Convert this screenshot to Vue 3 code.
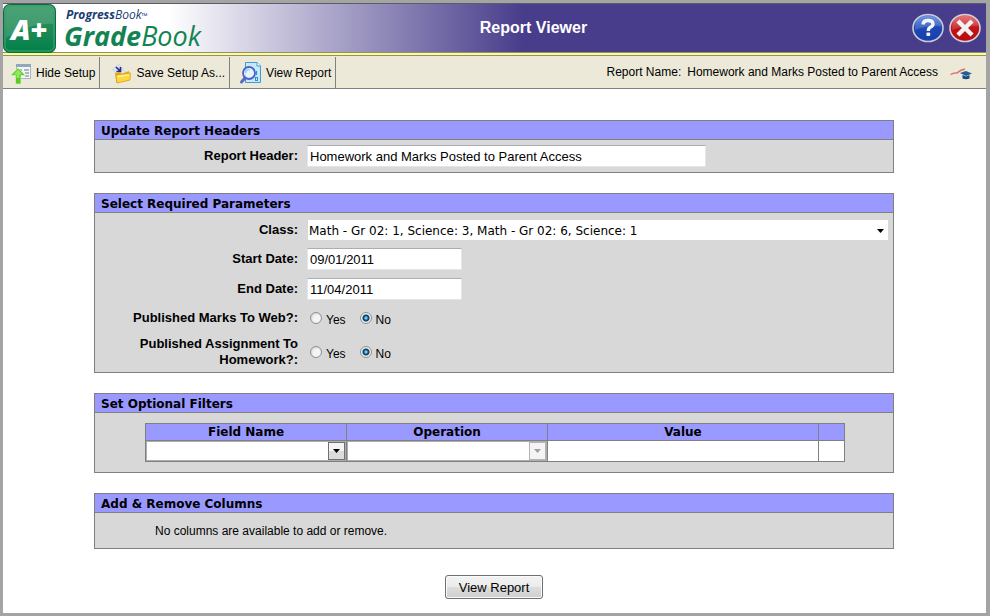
<template>
  <div class="window">
    <header class="banner">
      <div class="brand">
        <svg class="brand-mark" viewBox="0 0 54 50" role="img" aria-label="A+">
          <defs>
            <linearGradient id="markFill" x1="0" y1="0" x2="0" y2="1">
              <stop offset="0" stop-color="#2e9560" />
              <stop offset="0.5" stop-color="#1f8a57" />
              <stop offset="1" stop-color="#00814a" />
            </linearGradient>
          </defs>
          <rect x="0.5" y="0.5" width="52" height="48" rx="6" fill="url(#markFill)" stroke="#0b6b40" />
          <rect x="2" y="2" width="49" height="45" rx="5" fill="none" stroke="#6fbb93" stroke-opacity="0.6" />
          <path d="M3 24 V7 Q3 3 7 3 H46 Q50 3 50 7 V20 Q28 18 3 34Z" fill="#fff" fill-opacity="0.14" />
          <text x="8" y="36" class="mark-text">A+</text>
        </svg>
        <div class="brand-text">
          <span class="brand-top"><b>Progress</b>Book<small>™</small></span>
          <span class="brand-main"><b>Grade</b>Book</span>
        </div>
      </div>
      <h1>Report Viewer</h1>
      <div class="banner-actions">
        <button type="button" class="round-button" aria-label="Help">
          <svg viewBox="0 0 32 30">
            <defs>
              <linearGradient id="helpFill" x1="0" y1="0" x2="0" y2="1">
                <stop offset="0" stop-color="#5c86e0" />
                <stop offset="0.5" stop-color="#1c47b4" />
                <stop offset="1" stop-color="#173fae" />
              </linearGradient>
            </defs>
            <ellipse cx="16" cy="15" rx="15" ry="13.5" fill="url(#helpFill)" stroke="#c9cbd3" stroke-width="1.6" />
            <path d="M3 15 Q3 3 16 3 Q29 3 29 13 Q18 12 3 17Z" fill="#fff" fill-opacity="0.16" />
            <path d="M11 11.5 Q11.500 7.500 16 7.500 Q21 7.500 21 11 Q21 13 18.300 14.300 Q16.300 15.300 16.300 18" fill="none" stroke="#f3f4f8" stroke-width="3.400" />
            <rect x="14.400" y="19.500" width="3.800" height="3.600" rx="1" fill="#f3f4f8" />
          </svg>
        </button>
        <button type="button" class="round-button" aria-label="Close">
          <svg viewBox="0 0 32 30">
            <defs>
              <linearGradient id="closeFill" x1="0" y1="0" x2="0" y2="1">
                <stop offset="0" stop-color="#e4696b" />
                <stop offset="0.5" stop-color="#c01418" />
                <stop offset="1" stop-color="#b80c10" />
              </linearGradient>
            </defs>
            <ellipse cx="16" cy="15" rx="15" ry="13.5" fill="url(#closeFill)" stroke="#d6cfd6" stroke-width="1.6" />
            <path d="M3 15 Q3 3 16 3 Q29 3 29 13 Q18 12 3 17Z" fill="#fff" fill-opacity="0.14" />
            <path d="M10.500 9.500 L21.500 20.500 M21.500 9.500 L10.500 20.500" stroke="#f4f1f1" stroke-width="4.400" stroke-linecap="square" />
          </svg>
        </button>
      </div>
    </header>

    <nav class="toolbar">
      <button type="button" class="tool" @click="showSetup = !showSetup">
        <svg width="21" height="24" viewBox="1 0 21 24">
          <rect x="6.5" y="3.5" width="14" height="14" fill="#f4f6f8" stroke="#a9b4bd" />
          <rect x="6" y="3" width="15" height="3" fill="#8fa9bb" />
          <path d="M8 9h4M14 9h5M15 12h4M15 15h4" stroke="#5e7888" />
          <path d="M8 7 L15.5 14.5 H11 V23 H5.500 V14.5 H0.500Z" fill="#5cc928" stroke="#d5f2c4" stroke-width="0.7" />
          <path d="M8 8.500 L12.500 13.500 H9.500 V17 H6.500 V13.500 H3.500Z" fill="#93e75d" />
        </svg>
        Hide Setup
      </button>
      <button type="button" class="tool">
        <svg width="24" height="24" viewBox="-4 0 24 24">
          <path d="M0.500 8 L7 3 L13.500 11 L6 16Z" fill="#dfe2f5" stroke="#c4c8e2" stroke-width="0.6" />
          <path d="M4 6 L8 10 M8.500 6 V10.500 H4.500" fill="none" stroke="#26307c" stroke-width="1.7" />
          <path d="M3 12 L8 11 L9.500 13 L17 10 L18 19 L4.500 22Z" fill="#e9a711" />
          <path d="M4 14 L18.500 12 L18 19 L5 22Z" fill="#ffd83d" stroke="#d99a0b" stroke-width="0.700" />
          <path d="M5.500 15.500 L17 13.800" stroke="#fff3a6" stroke-width="1.3" />
        </svg>
        Save Setup As...
      </button>
      <button type="button" class="tool">
        <svg width="24" height="24" viewBox="-1 0 24 24">
          <path d="M6.500 1.500 H18 L21.500 5 V21.500 H6.500Z" fill="#c9e9fb" stroke="#3c9cd9" />
          <path d="M18 1.500 V5 H21.500" fill="#fff" stroke="#3c9cd9" />
          <path d="M17.500 10v4" stroke="#2f8fd0" stroke-width="1.2" />
          <rect x="16.500" y="16.500" width="2" height="3" fill="none" stroke="#2f8fd0" />
          <path d="M6 17 L2.500 21" stroke="#5f69b8" stroke-width="3" stroke-linecap="round" />
          <circle cx="10" cy="12" r="6" fill="#e6f6ff" fill-opacity="0.85" stroke="#4a63c4" stroke-width="1.800" />
          <path d="M6.500 12 Q7 8.500 10.500 8.500" fill="none" stroke="#8ed0f4" stroke-width="1.500" />
        </svg>
        View Report
      </button>
      <div class="report-name">
        <span>Report Name:</span>
        <span>{{ reportName }}</span>
        <svg width="23" height="14" viewBox="0 0 23 14">
          <path d="M0.500 7.500 Q4 5.500 7 6 Q10 3 15 2" fill="none" stroke="#e3696d" stroke-width="1.300" />
          <path d="M10 6 L16 4 L22 6.500 L16 9Z" fill="#1f5f96" />
          <path d="M12.500 8 L16 9.500 L19.500 8 V11.500 Q16 13 12.500 11.500Z" fill="#164a7a" />
        </svg>
      </div>
    </nav>

    <form class="content" @submit.prevent>
      <section class="panel">
        <h2>Update Report Headers</h2>
        <div class="fields header-fields">
          <div class="field">
            <label class="caption" for="reportHeader">Report Header:</label>
            <input id="reportHeader" v-model="reportHeader" type="text" class="text-box wide" />
          </div>
        </div>
      </section>

      <section class="panel">
        <h2>Select Required Parameters</h2>
        <div class="fields">
          <div class="field">
            <label class="caption" for="classes">Class:</label>
            <div class="class-select">
              <select id="classes" v-model="selectedClass">
                <option v-for="item in classes" :key="item">{{ item }}</option>
              </select>
              <svg class="arrow" width="7" height="4" viewBox="0 0 7 4"><path d="M0 0h7L3.500 4z" /></svg>
            </div>
          </div>
          <div class="field">
            <label class="caption" for="startDate">Start Date:</label>
            <input id="startDate" v-model="startDate" type="text" class="text-box" />
          </div>
          <div class="field">
            <label class="caption" for="endDate">End Date:</label>
            <input id="endDate" v-model="endDate" type="text" class="text-box" />
          </div>
          <div v-for="q in questions" :key="q.name" class="field" role="radiogroup" :aria-labelledby="q.name">
            <span :id="q.name" class="caption">{{ q.label }}</span>
            <div class="choices">
              <label v-for="option in ['Yes', 'No']" :key="option">
                <input v-model="q.value" type="radio" :name="q.name + 'Choice'" :value="option" />
                <span>{{ option }}</span>
              </label>
            </div>
          </div>
        </div>
      </section>

      <section class="panel">
        <h2>Set Optional Filters</h2>
        <div class="filters">
          <table>
            <colgroup>
              <col class="col-field" />
              <col class="col-field" />
              <col />
              <col class="col-action" />
            </colgroup>
            <thead>
              <tr>
                <th>Field Name</th>
                <th>Operation</th>
                <th>Value</th>
                <th></th>
              </tr>
            </thead>
            <tbody>
              <tr>
                <td>
                  <div class="cell-select">
                    <select v-model="filterField" aria-label="Field Name"><option value=""></option></select>
                    <span class="drop"><svg width="7" height="4" viewBox="0 0 7 4"><path d="M0 0h7L3.500 4z" /></svg></span>
                  </div>
                </td>
                <td>
                  <div class="cell-select disabled">
                    <select aria-label="Operation" disabled><option></option></select>
                    <span class="drop"><svg width="7" height="4" viewBox="0 0 7 4"><path d="M0 0h7L3.500 4z" /></svg></span>
                  </div>
                </td>
                <td></td>
                <td></td>
              </tr>
            </tbody>
          </table>
        </div>
      </section>

      <section class="panel">
        <h2>Add &amp; Remove Columns</h2>
        <p class="note">No columns are available to add or remove.</p>
      </section>

      <button type="submit" class="submit">View Report</button>
    </form>
  </div>
</template>

<script setup>
import { ref } from 'vue'

const reportName = 'Homework and Marks Posted to Parent Access'
const reportHeader = ref(reportName)
const showSetup = ref(true)

const classes = ['Math - Gr 02: 1, Science: 3, Math - Gr 02: 6, Science: 1']
const selectedClass = ref(classes[0])
const startDate = ref('09/01/2011')
const endDate = ref('11/04/2011')
const filterField = ref('')

const questions = ref([
  { name: 'marksToWeb', label: 'Published Marks To Web?:', value: 'No' },
  { name: 'assignmentToHomework', label: 'Published Assignment To Homework?:', value: 'No' }
])
</script>

<style>
body {
  margin: 0;
  background: #fff;
}
</style>

<style scoped>
.window {
  box-sizing: border-box;
  min-height: 100vh;
  border: 3px solid #a4a4a4;
  border-right-width: 4px;
  background: #fff;
  color: #000;
  font-family: "Liberation Sans", Arial, sans-serif;
  font-size: 12px;
}

button,
input,
select {
  font-family: inherit;
  color: inherit;
}

.banner {
  display: grid;
  grid-template-columns: auto 1fr auto;
  align-items: center;
  height: 48px;
  border-top: 1px solid #5c5c64;
  border-bottom: 1px solid #8f8a86;
  background: linear-gradient(to right, #fff 165px, #483d8b 520px);
}

.brand {
  display: flex;
  gap: 7px;
  align-items: center;
}

.brand-mark {
  width: 54px;
  height: 50px;
}

.mark-text {
  font: italic 800 29px "Open Sans", sans-serif;
  fill: #fff;
}

.brand-text {
  display: flex;
  flex-direction: column;
  padding-bottom: 4px;
  font-family: "Open Sans", sans-serif;
  font-style: italic;
}

.brand-top {
  padding-left: 2px;
  font-size: 12px;
  line-height: 16px;
  color: #1a3c74;
}

.brand-top small {
  font-size: 8px;
}

.brand-main {
  font-size: 27px;
  line-height: 24px;
  color: #128453;
}

.banner h1 {
  margin: 0;
  padding: 0 46px 2px 0;
  font-size: 16px;
  text-align: center;
  color: #fff;
}

.banner-actions {
  display: flex;
  justify-content: flex-end;
  gap: 5px;
  padding: 0 5px 2px 0;
}

.round-button {
  width: 32px;
  height: 30px;
  padding: 0;
  border: 0;
  background: none;
}

.round-button svg {
  display: block;
}

.toolbar {
  display: flex;
  height: 31px;
  padding-top: 2px;
  border-top: 2px solid #ffff80;
  border-bottom: 1px solid #808080;
  background: #ece9d8;
  box-shadow: inset 0 1px #8f8c80;
}

.tool {
  display: flex;
  align-items: center;
  gap: 4px;
  padding: 0 4px 0 8px;
  border: 0;
  border-right: 1px solid #808080;
  background: none;
  font-size: 12px;
  white-space: nowrap;
}

.report-name {
  display: flex;
  align-items: center;
  gap: 6px;
  margin-left: auto;
  padding: 0 13px 2px 0;
}

.report-name svg {
  margin: 5px 0 0 6px;
}

.content {
  display: flex;
  flex-direction: column;
  gap: 20px;
  padding: 31px 92px 14px 91px;
}

.panel {
  border: 1px solid #808080;
  background: #d8d8d8;
}

.panel h2 {
  margin: 0;
  padding: 2px 6px 0;
  border-bottom: 1px solid #808080;
  background: #9999ff;
  font: bold 12px/16px "DejaVu Sans", Verdana, sans-serif;
}

.fields {
  display: flex;
  flex-direction: column;
  gap: 8px;
  padding: 7px 5px 4px 0;
}

.header-fields {
  padding: 5px 5px 5px 0;
}

.field {
  display: grid;
  grid-template-columns: 203px 1fr;
  column-gap: 9px;
  align-items: center;
}

.caption {
  padding-left: 24px;
  font-size: 13px;
  font-weight: bold;
  line-height: 16px;
  text-align: right;
}

.text-box {
  box-sizing: border-box;
  width: 155px;
  height: 22px;
  padding: 0 2px;
  border: 1px solid #e2e5ea;
  border-top-color: #abadb3;
  background: #fff;
  font-size: 13px;
}

.wide {
  width: 399px;
  max-width: 100%;
}

.class-select {
  position: relative;
  margin-left: 1px;
}

select {
  display: block;
  box-sizing: border-box;
  width: 100%;
  height: 20px;
  padding: 0 16px 0 1px;
  appearance: none;
  border: 0;
  border-radius: 0;
  background: #fff;
  opacity: 1;
}

.class-select select {
  padding-top: 1px;
  font: 12px "DejaVu Sans", Verdana, sans-serif;
}

.arrow {
  position: absolute;
  top: 9px;
  right: 4px;
  pointer-events: none;
}

.choices {
  display: flex;
  gap: 14px;
  height: 20px;
  padding-left: 3px;
}

.choices label {
  display: flex;
  align-items: center;
  gap: 4px;
}

.choices span {
  padding-top: 3px;
}

.choices input {
  width: 12px;
  height: 12px;
  margin: 0;
  appearance: none;
  border: 1px solid #8e8f8f;
  border-radius: 50%;
  background: radial-gradient(circle at 60% 60%, #f4f4f4 40%, #c4c6c8 100%);
}

.choices input:checked {
  background: radial-gradient(circle, #7fc4ea 0 1px, #14608f 2px, #0a3858 3px, #eceef0 4px);
}

.filters {
  padding: 10px 48px 10px 50px;
}

table {
  width: 100%;
  table-layout: fixed;
  border-collapse: collapse;
}

.col-field {
  width: 201px;
}

.col-action {
  width: 26px;
}

th,
td {
  height: 20px;
  padding: 0;
  border: 1px solid #808080;
  background: #fff;
}

th {
  height: 16px;
  background: #9999ff;
  font: bold 12px/16px "DejaVu Sans", Verdana, sans-serif;
}

.cell-select {
  position: relative;
}

.cell-select select {
  border: 1px solid #abadb3;
}

.drop {
  position: absolute;
  top: 1px;
  right: 1px;
  box-sizing: border-box;
  display: flex;
  align-items: center;
  justify-content: center;
  width: 17px;
  height: 18px;
  border: 1px solid #707070;
  background: linear-gradient(#f4f4f4 50%, #dcdcdc 50%);
  pointer-events: none;
}

.disabled .drop {
  border-color: #b4b4b4;
  background: #f4f4f4;
  fill: #a0a0a0;
}

.note {
  margin: 0;
  padding: 10px 60px 9px;
  line-height: 16px;
}

.submit {
  align-self: center;
  height: 24px;
  margin-top: 6px;
  padding: 0 13px;
  border: 1px solid #707070;
  border-radius: 3px;
  background: linear-gradient(#f3f3f3, #ebebeb 50%, #dddddd 50%, #cfcfcf);
  box-shadow: inset 0 0 0 1px #fafafa;
  font-size: 13px;
}
</style>
